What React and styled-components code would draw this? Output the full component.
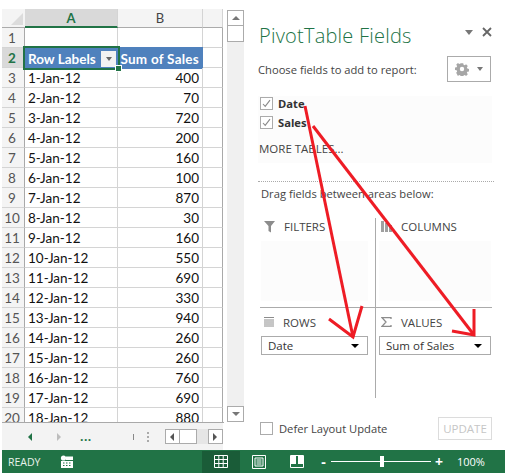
import React from 'react';
import styled, { createGlobalStyle } from 'styled-components';

const Global = createGlobalStyle`
  html, body { margin: 0; padding: 0; background: #fff; }
  #root { width: 505px; height: 475px; overflow: hidden; }
`;

const Frame = styled.div`
  position: relative;
  width: 505px;
  height: 475px;
  display: flex;
  flex-direction: column;
  font-family: "Open Sans", "Liberation Sans", sans-serif;
  color: #333;
`;
const Main = styled.div`
  display: flex;
  height: 450px;
  padding-left: 2px;
  box-sizing: border-box;
`;
const SheetArea = styled.div`
  width: 243px;
  flex: none;
  display: flex;
  flex-direction: column;
`;
const SheetBody = styled.div`
  flex: none;
  height: 423px;
  padding-top: 9px;
  box-sizing: border-box;
  display: flex;
`;
const GridWrap = styled.div`
  width: 222px;
  height: 414px;
  overflow: hidden;
  border-bottom: 1px solid #a9a9a9;
  box-sizing: border-box;
`;
const Grid = styled.div`
  display: grid;
  grid-template-columns: 23px 93px 85px 20px;
  grid-template-rows: 19px;
  grid-auto-rows: 20px;
  font-family: Lato, "Open Sans", sans-serif;
`;
const Corner = styled.div`
  background: #f4f4f4;
  border-bottom: 1px solid #ababab;
  position: relative;
  &::after {
    content: '';
    position: absolute;
    right: 2px;
    bottom: 2px;
    width: 0;
    height: 0;
    border-style: solid;
    border-width: 0 0 12px 12px;
    border-color: transparent transparent #dcdcdc transparent;
  }
`;
const ColHead = styled.div`
  box-sizing: border-box;
  display: flex;
  align-items: center;
  justify-content: center;
  font-size: 13px;
  background: ${p => (p.$active ? '#d9d9d9' : '#f4f4f4')};
  color: ${p => (p.$active ? '#217346' : '#444')};
  font-weight: ${p => (p.$active ? 700 : 400)};
  border-bottom: ${p => (p.$active ? '2px solid #217346' : '1px solid #ababab')};
  border-right: 1px solid #d4d4d4;
`;
const RowHead = styled.div`
  box-sizing: border-box;
  display: flex;
  align-items: center;
  justify-content: center;
  padding-right: 2px;
  padding-top: 1px;
  font-size: 13.5px;
  background: ${p => (p.$active ? '#d9d9d9' : '#f4f4f4')};
  color: ${p => (p.$active ? '#217346' : '#555')};
  font-weight: ${p => (p.$active ? 700 : 400)};
  border-right: 1px solid ${p => (p.$active ? '#217346' : '#a9a9a9')};
  border-bottom: 1px solid #d4d4d4;
`;
const Cell = styled.div`
  box-sizing: border-box;
  display: flex;
  align-items: center;
  justify-content: ${p => (p.$right ? 'flex-end' : 'flex-start')};
  padding: 1px 3px 0;
  font-size: 13.5px;
  color: #111;
  white-space: nowrap;
  border-right: 1px solid #d4d4d4;
  border-bottom: 1px solid #d4d4d4;
`;
const EdgeCell = styled(Cell)`
  border-right: 1px solid #a9a9a9;
`;
const HeaderCell = styled(Cell)`
  background: #4f81bd;
  color: #fff;
  font-weight: 700;
  font-size: 13.5px;
  letter-spacing: ${p => (p.$right ? '0.25px' : '0')};
  border: none;
  padding: 1px 4px 0 2px;
  justify-content: ${p => (p.$right ? 'flex-end' : 'space-between')};
  box-shadow: 0 -1px 0 #4f81bd, 0 1px 0 #4f81bd;
`;
const SelectedCell = styled(HeaderCell)`
  position: relative;
  z-index: 1;
  outline: 2px solid #217346;
  outline-offset: 0;
  box-shadow: none;
  padding: 1px 2px 0 3px;
`;
const FillHandle = styled.span`
  position: absolute;
  right: -4px;
  bottom: -4px;
  width: 5px;
  height: 5px;
  background: #217346;
  border: 1px solid #fff;
`;
const FilterButton = styled.span`
  width: 15px;
  height: 16px;
  background: #f2f2f2;
  display: flex;
  align-items: center;
  justify-content: center;
  &::after {
    content: '';
    border-style: solid;
    border-width: 4px 3.5px 0 3.5px;
    border-color: #666 transparent transparent transparent;
  }
`;

const VScroll = styled.div`
  margin-left: 3px;
  width: 17px;
  height: 412px;
  margin-top: 1px;
  background: #f0f0f0;
  display: flex;
  flex-direction: column;
  justify-content: space-between;
`;
const VTop = styled.div`
  display: flex;
  flex-direction: column;
`;
const ScrollButton = styled.div`
  width: 15px;
  height: 14px;
  background: #fff;
  border: 1px solid #ababab;
  display: flex;
  align-items: center;
  justify-content: center;
  &::after {
    content: '';
    border-style: solid;
    border-color: transparent;
    ${p => p.$dir === 'up' && 'border-width: 0 4px 4px 4px; border-bottom-color: #777;'}
    ${p => p.$dir === 'down' && 'border-width: 4px 4px 0 4px; border-top-color: #777;'}
    ${p => p.$dir === 'left' && 'border-width: 4px 4px 4px 0; border-right-color: #555;'}
    ${p => p.$dir === 'right' && 'border-width: 4px 0 4px 4px; border-left-color: #555;'}
  }
`;
const VThumb = styled.div`
  width: 15px;
  height: 15px;
  background: #fff;
  border: 1px solid #ababab;
  border-top: none;
`;

const TabBar = styled.div`
  flex: none;
  height: 27px;
  width: 221px;
  background: #f3f3f3;
  display: flex;
  align-items: center;
  box-sizing: border-box;
`;
const TabArrow = styled.span`
  width: 0;
  height: 0;
  border-style: solid;
  margin-left: ${p => p.$ml}px;
  margin-top: 1px;
  ${p => (p.$left
    ? 'border-width: 4px 4px 4px 0; border-color: transparent #217346 transparent transparent;'
    : 'border-width: 4px 0 4px 4px; border-color: transparent transparent transparent #bdbdbd;')}
`;
const Dots = styled.span`
  margin-left: 19px;
  font-size: 12px;
  font-weight: 700;
  color: #217346;
  letter-spacing: 0.5px;
  line-height: 1;
`;
const Tick = styled.span`
  margin-left: 41px;
  width: 1px;
  height: 6px;
  background: #888;
`;
const Grip = styled.span`
  margin-left: 13px;
  width: 2px;
  height: 10px;
  border-left: 2px dotted #aaa;
`;
const HScroll = styled.div`
  margin-left: 14px;
  display: flex;
  width: 59px;
  height: 15px;
  background: #e6e6e6;
  justify-content: space-between;
`;
const HGroup = styled.div`
  display: flex;
`;
const SmallButton = styled(ScrollButton)`
  width: 13px;
  height: 13px;
`;
const HThumb = styled.div`
  width: 16px;
  height: 13px;
  background: #fff;
  border: 1px solid #ababab;
  border-left: none;
`;

const Panel = styled.div`
  flex: 1;
  min-width: 0;
  padding: 19px 13px 0 13px;
  box-sizing: border-box;
  display: flex;
  flex-direction: column;
  position: relative;
`;
const TitleRow = styled.div`
  display: flex;
  align-items: center;
  justify-content: space-between;
  height: 34px;
`;
const Title = styled.div`
  font-family: "Open Sans", sans-serif;
  font-weight: 300;
  font-size: 20px;
  letter-spacing: 0.22px;
  color: #217346;
  white-space: nowrap;
  margin-left: 1px;
  margin-top: -2px;
`;
const TitleIcons = styled.div`
  display: flex;
  align-items: center;
  gap: 9px;
  margin-top: -8px;
`;
const SmallCaret = styled.span`
  width: 0;
  height: 0;
  border-style: solid;
  border-width: ${p => p.$h || 5}px ${p => p.$w || 4.5}px 0 ${p => p.$w || 4.5}px;
  border-color: ${p => p.$c || '#777'} transparent transparent transparent;
`;
const ChooseRow = styled.div`
  display: flex;
  justify-content: space-between;
  align-items: center;
  height: 26px;
  margin-top: 3px;
  padding-right: 1px;
`;
const Body = styled.div`
  font-size: 11.2px;
  color: #444;
  white-space: nowrap;
`;
const ToolsButton = styled.div`
  width: 44px;
  height: 26px;
  border: 1px solid #ababab;
  box-sizing: border-box;
  display: flex;
  align-items: center;
  justify-content: center;
  gap: 8px;
`;
const FieldList = styled.div`
  height: 69px;
  margin-top: 12px;
  background: linear-gradient(#fff 2px, #fcfcfc 2px);
  display: flex;
  flex-direction: column;
  box-sizing: border-box;
`;
const FieldRow = styled.div`
  display: flex;
  align-items: center;
  gap: 5px;
  height: 19px;
  padding-left: 2px;
  font-size: 11.2px;
  font-weight: 700;
  color: #333;
`;
const Check = styled.span`
  width: 13px;
  height: 13px;
  flex: none;
  border: 1px solid #ababab;
  background: #fff;
  box-sizing: border-box;
  display: flex;
  align-items: center;
  justify-content: center;
`;
const MoreTables = styled.div`
  margin-top: 9px;
  padding-left: 1px;
  font-size: 11.5px;
  line-height: 16px;
  color: #444;
`;
const Dotted = styled.div`
  margin-top: 18px;
  margin-right: -2px;
  border-top: 1px dotted #aaa;
`;
const DragLabel = styled(Body)`
  margin-top: 4px;
  margin-left: 3px;
  line-height: 16px;
  height: 16px;
`;
const Areas = styled.div`
  margin: 16px 0 0 2px;
  display: grid;
  grid-template-columns: 116px 116px;
  grid-template-rows: 89px 91px;
`;
const Area = styled.div`
  box-sizing: border-box;
  padding: ${p => (p.$bottom ? '5px' : '0')} ${p => (p.$right ? '1px' : '7px')} 0 ${p => (p.$right ? '3px' : '1px')};
  border-right: ${p => (p.$right ? 'none' : '1px solid #ababab')};
  border-top: ${p => (p.$bottom ? '1px solid #ababab' : 'none')};
  display: flex;
  flex-direction: column;
`;
const AreaHead = styled.div`
  display: flex;
  align-items: center;
  height: 18px;
  gap: ${p => (p.$right ? '9px' : '8px')};
  margin-top: ${p => (p.$top ? '-1px' : '0')};
  font-size: 11.5px;
  color: #444;
  padding-left: ${p => (p.$right ? '2px' : '3px')};
`;
const AreaBox = styled.div`
  flex: 1;
  margin-top: 6px;
  margin-bottom: 6px;
  background: #fcfcfc;
`;
const FieldChip = styled.div`
  margin-top: 5px;
  height: 19px;
  border: 1px solid #ababab;
  box-sizing: border-box;
  display: flex;
  align-items: center;
  justify-content: space-between;
  padding: 0 8px 0 6px;
  font-size: 11.5px;
  color: #333;
`;
const FooterRow = styled.div`
  margin: 19px 0 0 2px;
  height: 23px;
  display: flex;
  align-items: center;
  justify-content: space-between;
`;
const DeferLabel = styled.label`
  display: flex;
  align-items: center;
  gap: 6px;
  font-size: 11.2px;
  color: #444;
`;
const UpdateButton = styled.div`
  width: 54px;
  height: 23px;
  box-sizing: border-box;
  border: 1px solid #dcdcdc;
  display: flex;
  align-items: center;
  justify-content: center;
  font-size: 11.5px;
  color: #c6c6c6;
`;

const StatusBar = styled.div`
  margin-left: 2px;
  height: 23px;
  width: 503px;
  background: #217346;
  color: #fff;
  display: flex;
  align-items: center;
  font-size: 10.5px;
  box-sizing: border-box;
`;
const Ready = styled.span`
  margin-left: 6px;
  width: 52px;
  color: #e8f2ec;
`;
const ViewButton = styled.div`
  width: ${p => p.$w}px;
  height: 22px;
  flex: none;
  margin-left: ${p => p.$ml || 0}px;
  background: ${p => (p.$active ? '#1a5c38' : 'transparent')};
  display: flex;
  align-items: center;
  justify-content: center;
`;
const ZoomGroup = styled.div`
  display: flex;
  align-items: center;
  margin-left: 4px;
`;
const ZoomSign = styled.span`
  font-weight: 700;
  font-size: 14px;
  line-height: 1;
  width: ${p => p.$w}px;
  text-align: center;
`;
const ZoomTrack = styled.div`
  width: 100px;
  height: 1px;
  background: #fff;
  position: relative;
  margin: 0 4px;
`;
const ZoomThumb = styled.span`
  position: absolute;
  left: 49px;
  top: -5px;
  width: 4px;
  height: 11px;
  background: #fff;
`;
const ZoomValue = styled.span`
  margin-left: 14px;
  font-size: 11px;
`;

const Overlay = styled.svg`
  position: absolute;
  left: 0;
  top: 0;
  pointer-events: none;
`;

const CheckIcon = () => (
  <svg width="9" height="9" viewBox="0 0 9 9"><path d="M1 5l2.2 2.4L8 1.2" fill="none" stroke="#8a8a8a" strokeWidth="1.1" /></svg>
);
const Gear = () => (
  <svg width="14" height="14" viewBox="0 0 14 14">
    <path d="M5.7 1h2.6l.3 1.7 1.2.5 1.4-1 1.8 1.8-1 1.4.5 1.2 1.7.3v2.6l-1.7.3-.5 1.2 1 1.4-1.8 1.8-1.4-1-1.2.5-.3 1.7H5.7l-.3-1.7-1.2-.5-1.4 1L1 11l1-1.4-.5-1.2L-.2 8.1V5.5l1.7-.3.5-1.2-1-1.4L2.8.8l1.4 1 1.2-.5z" fill="#a6a6a6" transform="translate(.2 .2) scale(.97)" />
    <circle cx="7" cy="7" r="2.2" fill="#fff" />
  </svg>
);
const FilterIcon = () => (
  <svg width="12" height="13" viewBox="0 0 12 13"><path d="M0 1h11L7 6v6.5L4.5 11V6z" fill="#8c8c8c" /></svg>
);
const ColumnsIcon = () => (
  <svg width="11" height="11" viewBox="0 0 11 11"><path d="M0 0h3v11H0zM4 2h3v9H4zM8 4h3v7H8z" fill="#a0a0a0" /></svg>
);
const RowsIcon = () => (
  <svg width="11" height="10" viewBox="0 0 11 10"><path d="M0 .5h10M0 3h10M0 5h10M0 7h10M0 9h10" stroke="#8c8c8c" strokeWidth="1" /></svg>
);
const SigmaIcon = () => (
  <svg width="11" height="10" viewBox="0 0 11 10"><path d="M10 2V.7H1l4 4.3-4 4.3h9V8" fill="none" stroke="#8c8c8c" strokeWidth="1.3" /></svg>
);

const rows = [
  ['1-Jan-12', 400], ['2-Jan-12', 70], ['3-Jan-12', 720], ['4-Jan-12', 200], ['5-Jan-12', 160],
  ['6-Jan-12', 100], ['7-Jan-12', 870], ['8-Jan-12', 30], ['9-Jan-12', 160], ['10-Jan-12', 550],
  ['11-Jan-12', 690], ['12-Jan-12', 330], ['13-Jan-12', 940], ['14-Jan-12', 260], ['15-Jan-12', 260],
  ['16-Jan-12', 760], ['17-Jan-12', 690], ['18-Jan-12', 880],
];

export default function App() {
  return (
    <Frame>
      <Global />
      <Main>
        <SheetArea>
          <SheetBody>
            <GridWrap>
              <Grid>
                <Corner />
                <ColHead $active>A</ColHead>
                <ColHead>B</ColHead>
                <ColHead />
                <RowHead>1</RowHead>
                <Cell />
                <Cell />
                <EdgeCell />
                <RowHead $active>2</RowHead>
                <SelectedCell>
                  Row Labels
                  <FilterButton />
                  <FillHandle />
                </SelectedCell>
                <HeaderCell $right>Sum of Sales</HeaderCell>
                <EdgeCell />
                {rows.map(([d, v], i) => (
                  <React.Fragment key={d}>
                    <RowHead>{i + 3}</RowHead>
                    <Cell>{d}</Cell>
                    <Cell $right>{v}</Cell>
                    <EdgeCell />
                  </React.Fragment>
                ))}
              </Grid>
            </GridWrap>
            <VScroll>
              <VTop>
                <ScrollButton $dir="up" />
                <VThumb />
              </VTop>
              <ScrollButton $dir="down" />
            </VScroll>
          </SheetBody>
          <TabBar>
            <TabArrow $left $ml={26} />
            <TabArrow $ml={25} />
            <Dots>...</Dots>
            <Tick />
            <Grip />
            <HScroll>
              <HGroup>
                <SmallButton $dir="left" />
                <HThumb />
              </HGroup>
              <SmallButton $dir="right" />
            </HScroll>
          </TabBar>
        </SheetArea>
        <Panel>
          <TitleRow>
            <Title>PivotTable Fields</Title>
            <TitleIcons>
              <SmallCaret $h={5} $w={4.5} />
              <svg width="10" height="10" viewBox="0 0 10 10"><path d="M1 1l8 8M9 1l-8 8" stroke="#666" strokeWidth="1.8" /></svg>
            </TitleIcons>
          </TitleRow>
          <ChooseRow>
            <Body>Choose fields to add to report:</Body>
            <ToolsButton>
              <Gear />
              <SmallCaret $h={4} $w={3.5} />
            </ToolsButton>
          </ChooseRow>
          <FieldList>
            <FieldRow><Check><CheckIcon /></Check>Date</FieldRow>
            <FieldRow><Check><CheckIcon /></Check>Sales</FieldRow>
            <MoreTables>MORE TABLES...</MoreTables>
          </FieldList>
          <Dotted />
          <DragLabel>Drag fields between areas below:</DragLabel>
          <Areas>
            <Area>
              <AreaHead $top><FilterIcon />FILTERS</AreaHead>
              <AreaBox />
            </Area>
            <Area $right>
              <AreaHead $top $right><ColumnsIcon />COLUMNS</AreaHead>
              <AreaBox />
            </Area>
            <Area $bottom>
              <AreaHead><RowsIcon />ROWS</AreaHead>
              <FieldChip>Date<SmallCaret $h={4} $w={4} $c="#000" /></FieldChip>
            </Area>
            <Area $bottom $right>
              <AreaHead $right><SigmaIcon />VALUES</AreaHead>
              <FieldChip>Sum of Sales<SmallCaret $h={4} $w={4} $c="#000" /></FieldChip>
            </Area>
          </Areas>
          <FooterRow>
            <DeferLabel><Check />Defer Layout Update</DeferLabel>
            <UpdateButton>UPDATE</UpdateButton>
          </FooterRow>
        </Panel>
      </Main>
      <StatusBar>
        <Ready>READY</Ready>
        <svg width="14" height="14" viewBox="0 0 14 14">
          <circle cx="3.5" cy="3" r="2.6" fill="#fff" />
          <path d="M1 6h12V13H1z M6 1.5h7V5H6z" fill="#fff" />
          <path d="M3 8h1.5M6 8h1.5M9 8h1.5M3 10.5h1.5M6 10.5h1.5M9 10.5h1.5" stroke="#217346" strokeWidth="1" />
        </svg>
        <ViewButton $w={38} $active $ml={128}>
          <svg width="14" height="13" viewBox="0 0 14 13"><path d="M.5.5h13v12H.5zM.5 4.5h13M.5 8.5h13M4.8.5v12M9.2.5v12" fill="none" stroke="#fff" /></svg>
        </ViewButton>
        <ViewButton $w={38}>
          <svg width="14" height="14" viewBox="0 0 14 14"><path d="M.5.5h13v13H.5z M3 3h8v8H3z" fill="none" stroke="#fff" /><path d="M4.5 5h5M4.5 7h5M4.5 9h5" stroke="#fff" /></svg>
        </ViewButton>
        <ViewButton $w={38}>
          <svg width="14" height="13" viewBox="0 0 14 13"><path d="M.5.5h13v12H.5z" fill="none" stroke="#fff" /><path d="M1 1h5v8H1zM8 1h5v8H8z" fill="#fff" /></svg>
        </ViewButton>
        <ZoomGroup>
          <ZoomSign $w={7}>-</ZoomSign>
          <ZoomTrack><ZoomThumb /></ZoomTrack>
          <ZoomSign $w={8}>+</ZoomSign>
          <ZoomValue>100%</ZoomValue>
        </ZoomGroup>
      </StatusBar>
      <Overlay width="505" height="475" viewBox="0 0 505 475">
        <g fill="none" stroke="#ee1c25" strokeWidth="3">
          <path d="M305 106L353 337" />
          <path d="M329 319L353 337L362 306" />
          <path d="M313 126L474 335" />
          <path d="M452 331L474 335L474 309" />
        </g>
      </Overlay>
    </Frame>
  );
}
